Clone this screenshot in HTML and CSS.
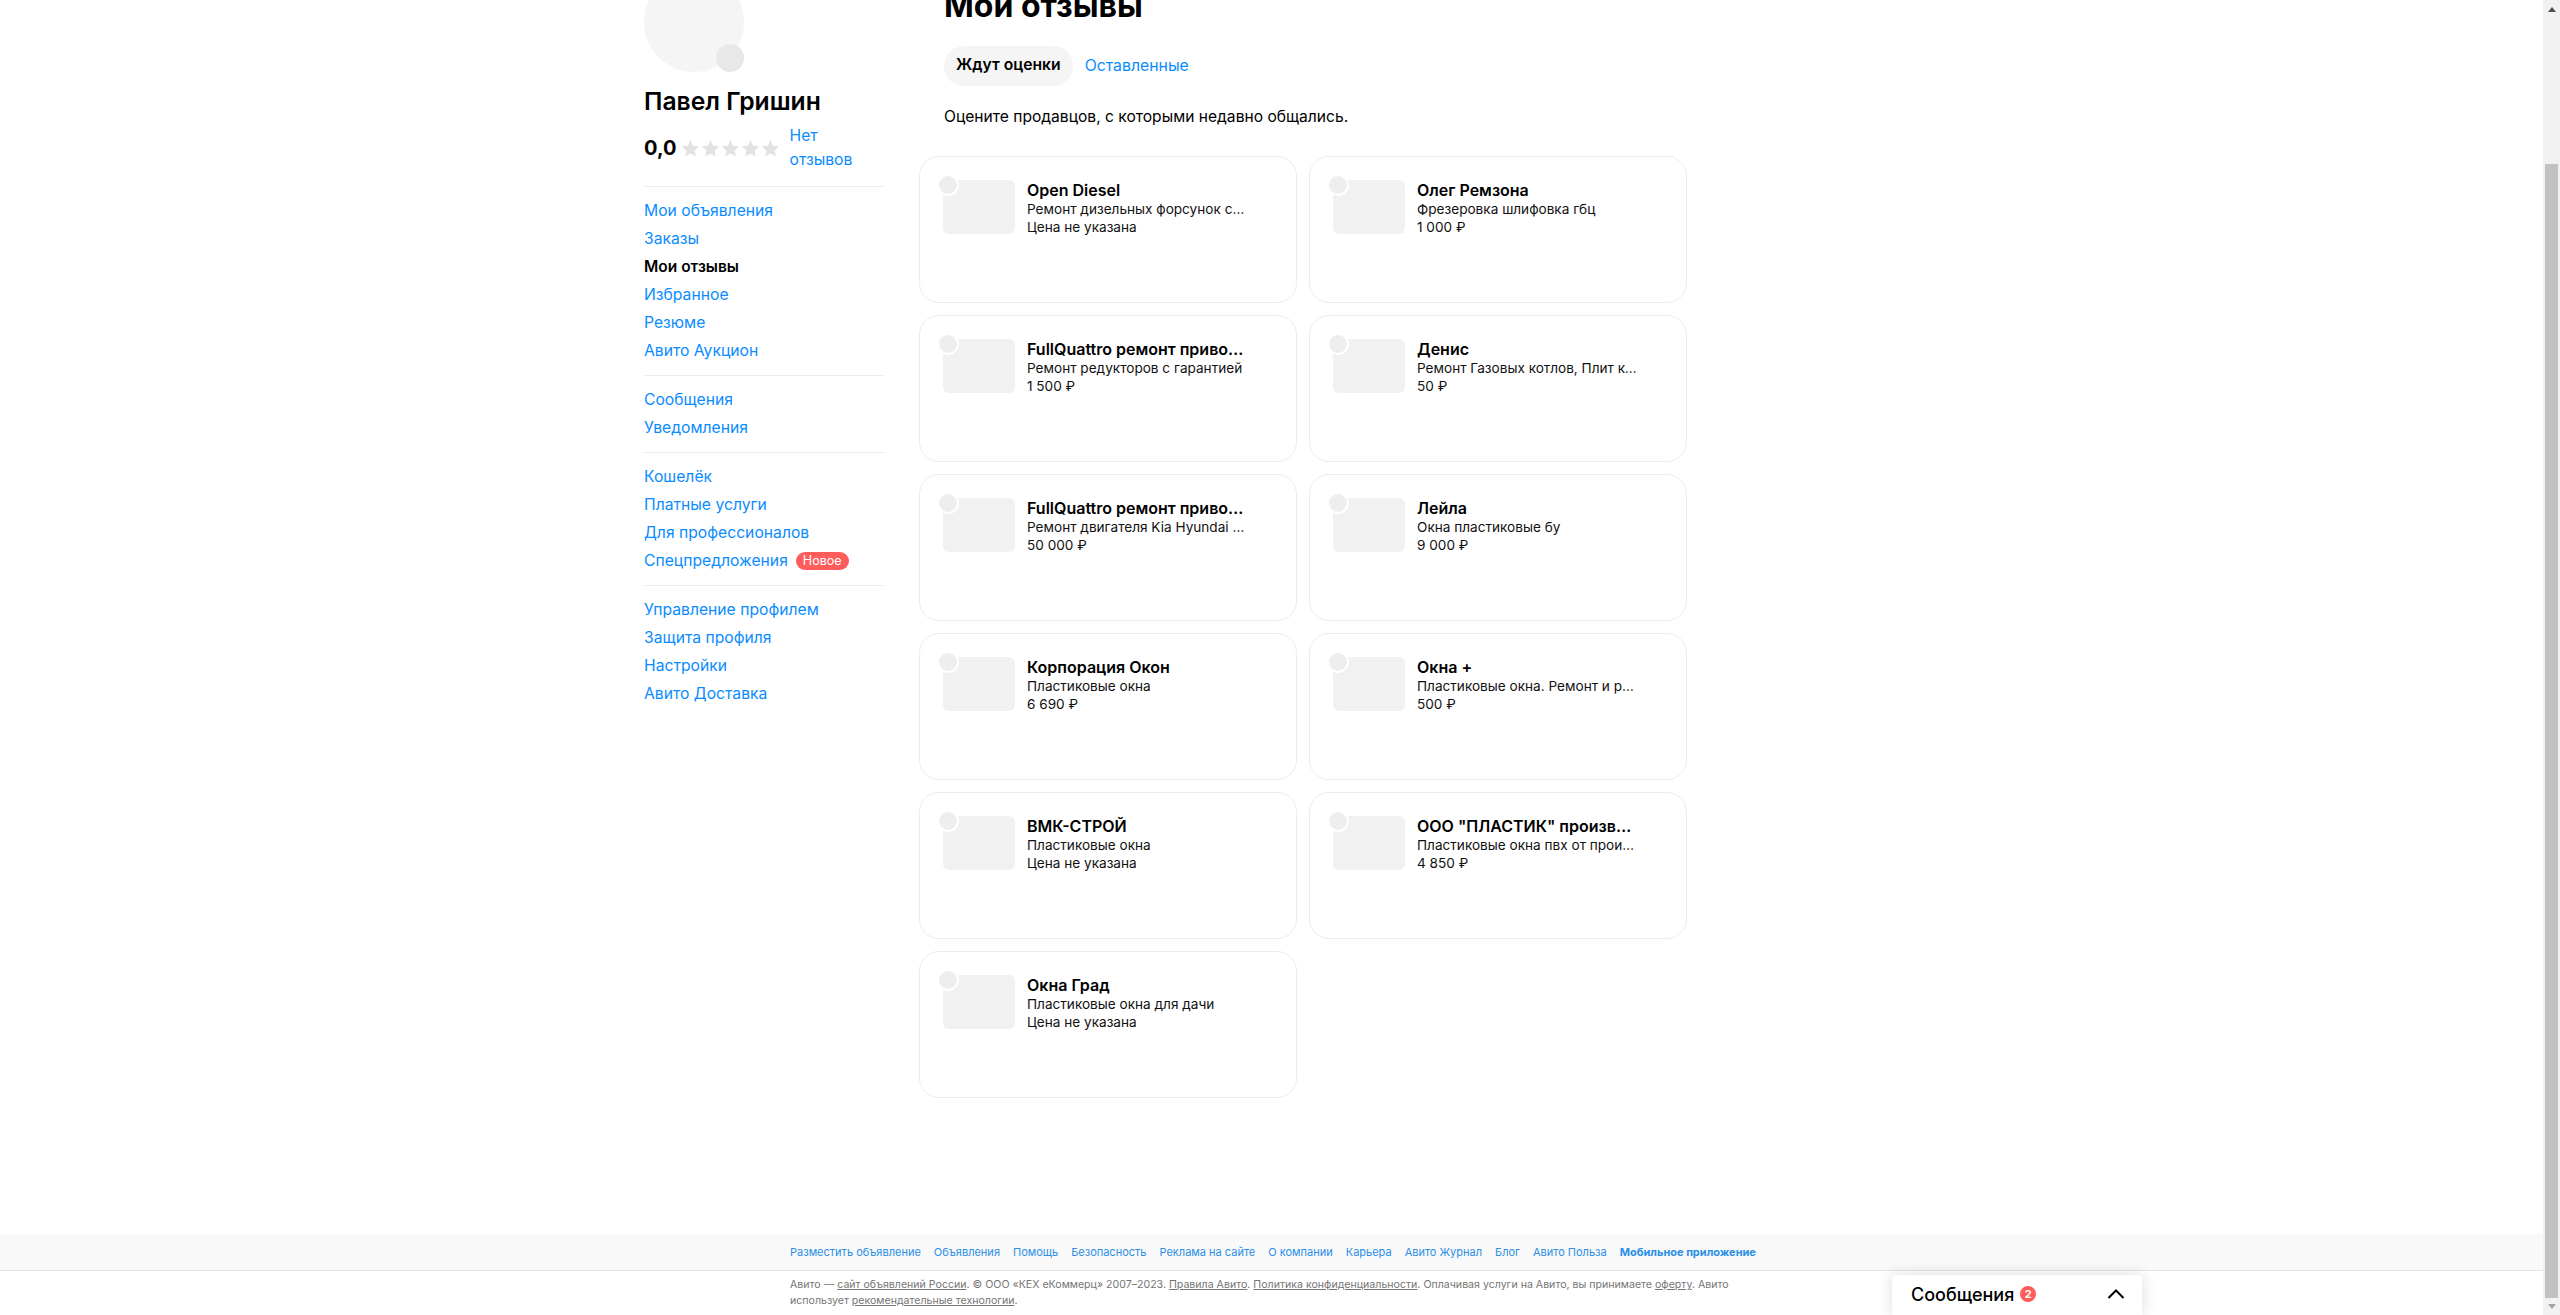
FILE: index.html
```html
<!DOCTYPE html>
<html lang="ru">
<head>
<meta charset="utf-8">
<title>Мои отзывы</title>
<link rel="stylesheet" href="styles.css">
</head>
<body>
<div class="window">
  <div class="page">
    <div class="layout">
      <aside class="sidebar">
        <div class="avatar"><span class="avatar-badge"></span></div>
        <div class="user-name">Павел Гришин</div>
        <div class="rating">
          <span class="rating-value">0,0</span>
          <span class="stars">
            <svg class="star" viewBox="0 0 20 20"><path d="M10 1l2.700 6 6.300.7-4.700 4.300 1.300 6.500L10 15.200 4.400 18.500l1.300-6.500L1 7.700 7.300 7z"/></svg>
            <svg class="star" viewBox="0 0 20 20"><path d="M10 1l2.700 6 6.300.7-4.700 4.300 1.300 6.500L10 15.200 4.400 18.500l1.300-6.500L1 7.700 7.300 7z"/></svg>
            <svg class="star" viewBox="0 0 20 20"><path d="M10 1l2.700 6 6.300.7-4.700 4.300 1.300 6.500L10 15.200 4.400 18.500l1.300-6.500L1 7.700 7.300 7z"/></svg>
            <svg class="star" viewBox="0 0 20 20"><path d="M10 1l2.700 6 6.300.7-4.700 4.300 1.300 6.500L10 15.200 4.400 18.500l1.300-6.500L1 7.700 7.300 7z"/></svg>
            <svg class="star" viewBox="0 0 20 20"><path d="M10 1l2.700 6 6.300.7-4.700 4.300 1.300 6.500L10 15.200 4.400 18.500l1.300-6.500L1 7.700 7.300 7z"/></svg>
          </span>
          <a class="link rating-link" href="#">Нет отзывов</a>
        </div>
        <nav class="nav-group">
          <a class="link" href="#">Мои объявления</a>
          <a class="link" href="#">Заказы</a>
          <span class="nav-current">Мои отзывы</span>
          <a class="link" href="#">Избранное</a>
          <a class="link" href="#">Резюме</a>
          <a class="link" href="#">Авито Аукцион</a>
        </nav>
        <nav class="nav-group">
          <a class="link" href="#">Сообщения</a>
          <a class="link" href="#">Уведомления</a>
        </nav>
        <nav class="nav-group">
          <a class="link" href="#">Кошелёк</a>
          <a class="link" href="#">Платные услуги</a>
          <a class="link" href="#">Для профессионалов</a>
          <a class="link" href="#">Спецпредложения<span class="new-badge">Новое</span></a>
        </nav>
        <nav class="nav-group nav-last">
          <a class="link" href="#">Управление профилем</a>
          <a class="link" href="#">Защита профиля</a>
          <a class="link" href="#">Настройки</a>
          <a class="link" href="#">Авито Доставка</a>
        </nav>
      </aside>
      <main class="content">
        <h1 class="title">Мои отзывы</h1>
        <div class="tabs">
          <span class="tab-active">Ждут оценки</span>
          <a class="link" href="#">Оставленные</a>
        </div>
        <p class="hint">Оцените продавцов, с которыми недавно общались.</p>
        <div class="cards">
          <article class="card"><div class="thumb"><span class="thumb-dot"></span></div><div class="card-body"><div class="card-title">Open Diesel</div><div class="card-line">Ремонт дизельных форсунок с гарантией</div><div class="card-line">Цена не указана</div></div></article>
          <article class="card"><div class="thumb"><span class="thumb-dot"></span></div><div class="card-body"><div class="card-title">Олег Ремзона</div><div class="card-line">Фрезеровка шлифовка гбц</div><div class="card-line">1 000 ₽</div></div></article>
          <article class="card"><div class="thumb"><span class="thumb-dot"></span></div><div class="card-body"><div class="card-title">FullQuattro ремонт приводов</div><div class="card-line">Ремонт редукторов с гарантией</div><div class="card-line">1 500 ₽</div></div></article>
          <article class="card"><div class="thumb"><span class="thumb-dot"></span></div><div class="card-body"><div class="card-title">Денис</div><div class="card-line">Ремонт Газовых котлов, Плит колонок</div><div class="card-line">50 ₽</div></div></article>
          <article class="card"><div class="thumb"><span class="thumb-dot"></span></div><div class="card-body"><div class="card-title">FullQuattro ремонт приводов</div><div class="card-line">Ремонт двигателя Kia Hyundai любой сложности</div><div class="card-line">50 000 ₽</div></div></article>
          <article class="card"><div class="thumb"><span class="thumb-dot"></span></div><div class="card-body"><div class="card-title">Лейла</div><div class="card-line">Окна пластиковые бу</div><div class="card-line">9 000 ₽</div></div></article>
          <article class="card"><div class="thumb"><span class="thumb-dot"></span></div><div class="card-body"><div class="card-title">Корпорация Окон</div><div class="card-line">Пластиковые окна</div><div class="card-line">6 690 ₽</div></div></article>
          <article class="card"><div class="thumb"><span class="thumb-dot"></span></div><div class="card-body"><div class="card-title">Окна +</div><div class="card-line">Пластиковые окна. Ремонт и регулировка</div><div class="card-line">500 ₽</div></div></article>
          <article class="card"><div class="thumb"><span class="thumb-dot"></span></div><div class="card-body"><div class="card-title">ВМК-СТРОЙ</div><div class="card-line">Пластиковые окна</div><div class="card-line">Цена не указана</div></div></article>
          <article class="card"><div class="thumb"><span class="thumb-dot"></span></div><div class="card-body"><div class="card-title">ООО "ПЛАСТИК" производство</div><div class="card-line">Пластиковые окна пвх от производителя</div><div class="card-line">4 850 ₽</div></div></article>
          <article class="card"><div class="thumb"><span class="thumb-dot"></span></div><div class="card-body"><div class="card-title">Окна Град</div><div class="card-line">Пластиковые окна для дачи</div><div class="card-line">Цена не указана</div></div></article>
        </div>
      </main>
    </div>
    <footer class="footer">
      <div class="footer-links">
        <a href="#">Разместить объявление</a>
        <a href="#">Объявления</a>
        <a href="#">Помощь</a>
        <a href="#">Безопасность</a>
        <a href="#">Реклама на сайте</a>
        <a href="#">О компании</a>
        <a href="#">Карьера</a>
        <a href="#">Авито Журнал</a>
        <a href="#">Блог</a>
        <a href="#">Авито Польза</a>
        <a class="footer-strong" href="#">Мобильное приложение</a>
      </div>
      <p class="legal">Авито — <a href="#">сайт объявлений России</a>. © ООО «КЕХ еКоммерц» 2007–2023. <a href="#">Правила Авито</a>. <a href="#">Политика конфиденциальности</a>. Оплачивая услуги на Авито, вы принимаете <a href="#">оферту</a>. Авито использует <a href="#">рекомендательные технологии</a>.</p>
    </footer>
    <div class="messenger">
      <span class="messenger-label">Сообщения</span>
      <span class="messenger-count">2</span>
      <svg class="messenger-chevron" viewBox="0 0 18 10"><path d="M1.500 9L9 1.500 16.500 9"/></svg>
    </div>
  </div>
  <div class="scrollbar">
    <svg class="scroll-arrow" viewBox="0 0 8 5"><path d="M4 0l4 5H0z"/></svg>
    <div class="scroll-thumb"></div>
    <svg class="scroll-arrow-down" viewBox="0 0 8 5"><path d="M0 0h8L4 5z"/></svg>
  </div>
</div>
</body>
</html>
```
FILE: styles.css
```css
* { box-sizing: border-box; }
html, body { margin: 0; height: 100%; overflow: hidden; background: #fff; }
body { font-family: Inter, "Noto Sans", sans-serif; color: #000; }
a { text-decoration: none; }
.window { display: flex; height: 1315px; }
.page { position: relative; flex: 1; min-width: 0; display: flex; flex-direction: column; overflow: hidden; }
.layout { flex: 1; display: flex; margin-top: -28px; padding-left: 644px; }
.link { color: #0a8cff; }
.sidebar { width: 240px; margin-right: 35px; flex: none; font-size: 15.700px; }
.avatar { position: relative; width: 100px; height: 100px; border-radius: 50%; background: #f5f5f5; }
.avatar-badge { position: absolute; right: 0; bottom: 0; width: 28px; height: 28px; border-radius: 50%; background: #e8e8e8; }
.user-name { margin-top: 13px; font-size: 24.700px; line-height: 32px; font-weight: 600; }
.rating { display: flex; align-items: center; margin-top: 7px; padding-bottom: 14px; border-bottom: 1px solid #ececec; }
.rating-value { font-size: 20px; font-weight: 700; line-height: 28px; }
.stars { display: flex; margin-left: 5px; gap: 1px; }
.star { width: 19px; height: 19px; fill: #e2e2e2; }
.rating-link { width: 70px; margin-left: 9px; line-height: 24px; font-size: 15.700px; }
.nav-group { display: flex; flex-direction: column; padding: 10px 0; border-bottom: 1px solid #ececec; line-height: 28px; }
.nav-last { border-bottom: 0; }
.nav-current { font-weight: 600; font-size: 15.500px; }
.new-badge { display: inline-block; vertical-align: 1px; margin-left: 8px; padding: 0 7px; height: 18px; line-height: 18px; border-radius: 9px; background: #ff5c5c; color: #fff; font-size: 12.500px; }
.content { width: 780px; padding-top: 14px; }
.title { margin: 0; padding-left: 25px; font-size: 32px; line-height: 40px; font-weight: 700; }
.tabs { display: flex; align-items: center; gap: 12px; margin: 20px 0 0 25px; font-size: 15.800px; }
.tab-active { height: 40px; padding: 0 12px; line-height: 38px; border-radius: 20px; background: #f5f5f5; font-weight: 600; font-size: 15.700px; }
.tabs .link { margin-bottom: 2px; }
.hint { margin: 19px 0 0 25px; font-size: 15.600px; line-height: 24px; }
.cards { display: grid; grid-template-columns: 378px 378px; gap: 12px; margin-top: 27px; }
.card { display: flex; height: 147px; padding: 23px; border: 1px solid #ededed; border-radius: 20px; }
.thumb { position: relative; flex: none; width: 72px; height: 54px; margin-right: 12px; border-radius: 6px; background: #f1f1f1; }
.thumb-dot { position: absolute; left: -6px; top: -6px; width: 22px; height: 22px; border-radius: 50%; background: #eeeeee; border: 2px solid #fff; }
.card-body { width: 220px; min-width: 0; padding-top: 1px; }
.card-title { font-size: 16px; line-height: 19px; font-weight: 600; white-space: nowrap; overflow: hidden; text-overflow: ellipsis; }
.card-line { font-size: 13.600px; line-height: 18px; white-space: nowrap; overflow: hidden; text-overflow: ellipsis; color: #111; }
.footer { flex: none; height: 81px; }
.footer-links { display: flex; gap: 13px; height: 37px; padding: 0 0 0 790px; align-items: center; background: #f9f9f9; border-bottom: 1px solid #e4e4e4; font-size: 11px; }
.footer-links a { color: #2a8fe6; }
.footer-links .footer-strong { font-weight: 700; }
.legal { width: 960px; margin: 6px 0 0 790px; font-size: 10.600px; line-height: 16px; color: #757575; }
.legal a { color: #757575; text-decoration: underline; }
.messenger { position: absolute; left: 1892px; bottom: 0; width: 250px; height: 40px; display: flex; align-items: center; padding: 0 17px 2px 19px; background: #fff; border-radius: 4px 4px 0 0; box-shadow: 0 0 16px rgba(0,0,0,.14); }
.messenger-label { font-size: 18px; font-weight: 500; }
.messenger-count { width: 16px; height: 16px; margin-left: 6px; border-radius: 50%; background: #ff5c5c; color: #fff; font-size: 11px; font-weight: 700; line-height: 16px; text-align: center; }
.messenger-chevron { width: 18px; height: 10px; margin-left: auto; fill: none; stroke: #000; stroke-width: 2; }
.scrollbar { flex: none; width: 17px; background: #f1f1f1; display: flex; flex-direction: column; align-items: center; }
.scroll-arrow { flex: none; width: 8px; height: 5px; margin-top: 7px; fill: #505050; }
.scroll-thumb { width: 13px; margin-top: 152px; flex: 1; background: #c1c1c1; }
.scroll-arrow-down { flex: none; width: 8px; height: 5px; margin: 6px 0; fill: #a3a3a3; }
```
